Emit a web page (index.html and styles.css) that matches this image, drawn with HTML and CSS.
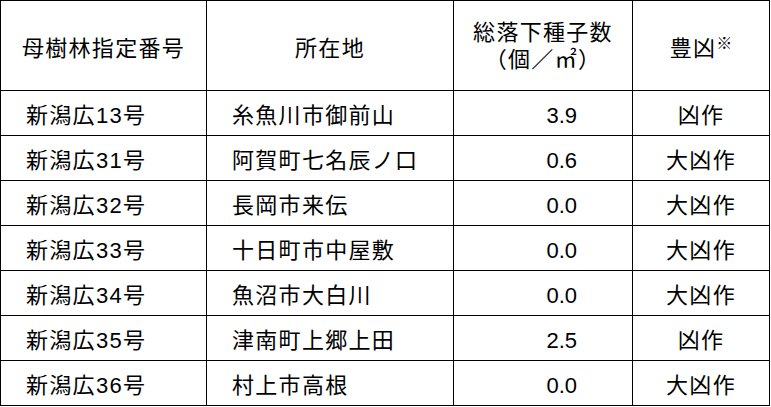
FILE: index.html
```html
<!DOCTYPE html>
<html lang="ja">
<head>
<meta charset="utf-8">
<link rel="stylesheet" href="styles.css">
</head>
<body>
<div class="grid">
  <div class="cell head">母樹林指定番号</div>
  <div class="cell head">所在地</div>
  <div class="cell head two"><span>総落下種子数</span><span>（個／㎡）</span></div>
  <div class="cell head">豊凶<sup class="mark">※</sup></div>

  <div class="cell left">新潟広13号</div>
  <div class="cell left">糸魚川市御前山</div>
  <div class="cell num">3.9</div>
  <div class="cell center">凶作</div>

  <div class="cell left">新潟広31号</div>
  <div class="cell left">阿賀町七名辰ノ口</div>
  <div class="cell num">0.6</div>
  <div class="cell center">大凶作</div>

  <div class="cell left">新潟広32号</div>
  <div class="cell left">長岡市来伝</div>
  <div class="cell num">0.0</div>
  <div class="cell center">大凶作</div>

  <div class="cell left">新潟広33号</div>
  <div class="cell left">十日町市中屋敷</div>
  <div class="cell num">0.0</div>
  <div class="cell center">大凶作</div>

  <div class="cell left">新潟広34号</div>
  <div class="cell left">魚沼市大白川</div>
  <div class="cell num">0.0</div>
  <div class="cell center">大凶作</div>

  <div class="cell left">新潟広35号</div>
  <div class="cell left">津南町上郷上田</div>
  <div class="cell num">2.5</div>
  <div class="cell center">凶作</div>

  <div class="cell left">新潟広36号</div>
  <div class="cell left">村上市高根</div>
  <div class="cell num">0.0</div>
  <div class="cell center">大凶作</div>
</div>
</body>
</html>
```

FILE: styles.css
```css
html, body {
  margin: 0;
  padding: 0;
  background: #ffffff;
}

.grid {
  display: grid;
  grid-template-columns: 205px 246px 178px 136px;
  grid-template-rows: 89px repeat(7, 44px);
  gap: 1px;
  padding: 1px;
  background: #000000;
  width: max-content;
  font-family: "Liberation Sans", "Noto Sans CJK JP", sans-serif;
  font-size: 22px;
  letter-spacing: 1.3px;
  color: #000000;
  line-height: 27px;
}

.cell {
  background: #ffffff;
  display: flex;
  align-items: center;
  padding-top: 4px;
  box-sizing: border-box;
}

.head {
  justify-content: center;
  padding-top: 6px;
}

.two {
  flex-direction: column;
  justify-content: center;
  padding-top: 0;
}

.mark {
  font-size: 16px;
  line-height: 1;
  align-self: flex-start;
  margin-top: 29px;
  letter-spacing: 0;
}

.left {
  justify-content: flex-start;
  padding-left: 25px;
}

.num {
  justify-content: flex-end;
  padding-right: 55px;
  letter-spacing: 0;
}

.center {
  justify-content: center;
}
```
